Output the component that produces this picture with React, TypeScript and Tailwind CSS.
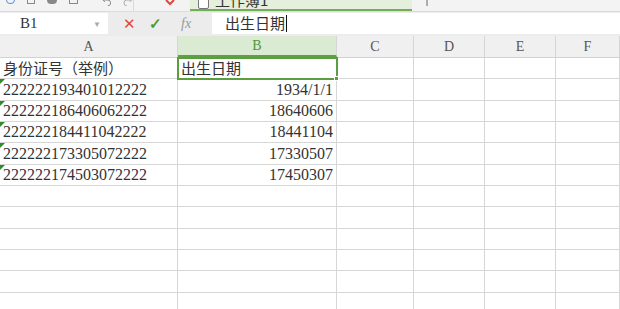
import React from 'react';

const cols = [
  { key: 'A', width: 'w-[178px]' },
  { key: 'B', width: 'w-[159px]' },
  { key: 'C', width: 'w-[77px]' },
  { key: 'D', width: 'w-[71px]' },
  { key: 'E', width: 'w-[71px]' },
  { key: 'F', width: 'w-[64px]' },
];

const rows: { a: string; b: string; flag?: boolean; text?: boolean }[] = [
  { a: '身份证号（举例）', b: '出生日期', text: true },
  { a: '222222193401012222', b: '1934/1/1', flag: true },
  { a: '222222186406062222', b: '18640606', flag: true },
  { a: '222222184411042222', b: '18441104', flag: true },
  { a: '222222173305072222', b: '17330507', flag: true },
  { a: '222222174503072222', b: '17450307', flag: true },
  { a: '', b: '' },
  { a: '', b: '' },
  { a: '', b: '' },
  { a: '', b: '' },
  { a: '', b: '' },
  { a: '', b: '' },
];

const serif = "font-['Liberation_Serif','Noto_Sans_CJK_SC',serif]";
const cjk = "font-['Noto_Sans_CJK_SC',sans-serif]";

const TopStrip = () => (
  <div className="flex h-[11px] overflow-hidden bg-[#f3f3f3]">
    <div className="flex w-[133px] items-start gap-[12px] pl-[6px] -mt-[4px]">
      <div className="h-[8px] w-[9px] rounded-sm border border-[#5b8fd6]" />
      <div className="h-[8px] w-[9px] border border-[#888]" />
      <div className="h-[8px] w-[10px] rounded-sm bg-[#888]" />
      <div className="h-[8px] w-[9px] border border-[#888]" />
      <svg width="10" height="10" viewBox="0 0 10 10" className="ml-[12px]">
        <path d="M3 2 L1 4 L3 6 M1 4 H6 A3 3 0 0 1 6 10" fill="none" stroke="#888" strokeWidth="1" />
      </svg>
      <svg width="10" height="10" viewBox="0 0 10 10">
        <path d="M7 2 L9 4 L7 6 M9 4 H4 A3 3 0 0 0 4 10" fill="none" stroke="#aaa" strokeWidth="1" />
      </svg>
    </div>
    <div className="h-full w-px bg-[#dadada]" />
    <div className="flex w-[56px] items-start justify-center pl-[16px]">
      <svg width="10" height="8" viewBox="0 0 10 8">
        <path d="M1 0 L5 4 L9 0" fill="none" stroke="#e0483f" strokeWidth="2" />
      </svg>
    </div>
    <div className="flex w-[222px] items-start gap-[6px] border-b-2 border-[#74ad5a] bg-[#e4efdc] pl-[8px] -mt-[2px]">
      <div className="h-[11px] w-[11px] rounded-[2px] border border-[#777] bg-white" />
      <span className={`${cjk} -mt-[6px] text-[15px] leading-[15px] text-[#333]`}>工作簿1</span>
    </div>
    <div className="flex w-[30px] items-start justify-center">
      <svg width="8" height="6" viewBox="0 0 8 6">
        <path d="M4 0 V6" stroke="#666" strokeWidth="1" />
      </svg>
    </div>
  </div>
);

const FormulaBar = () => (
  <div className="flex h-[25px] border-t border-[#dcdcdc] bg-[#ececec] pt-px pb-[2px]">
    <div className="flex w-[108px] items-center justify-between bg-white pl-[20px] pr-[7px]">
      <span className={`${serif} text-[15px] text-[#333]`}>B1</span>
      <span className="text-[8px] text-[#aaa]">▼</span>
    </div>
    <div className="flex w-[104px] items-center gap-[13px] pl-[15px]">
      <span className="text-[15px] leading-none text-[#e0483f]">✕</span>
      <span className="text-[15px] font-bold leading-none text-[#4e9a2e]">✓</span>
      <span className={`${serif} ml-[6px] text-[14px] italic text-[#999]`}>fx</span>
    </div>
    <div className="flex flex-1 items-center bg-white pl-[13px]">
      <span className={`${cjk} text-[15px] text-[#333]`}>出生日期</span>
      <span className="ml-px h-[17px] w-px bg-[#111]" />
    </div>
  </div>
);

const Header = () => (
  <div className="flex h-[22px] border-b border-[#d2d2d2] bg-[#f0f0f0]">
    {cols.map((c) =>
      c.key === 'B' ? (
        <div
          key={c.key}
          className={`${c.width} ${serif} flex items-center justify-center border-r border-b-2 border-[#d6d6d6] border-b-[#5fa046] bg-[#dbead3] text-[14px] text-[#4a9a34]`}
        >
          {c.key}
        </div>
      ) : (
        <div
          key={c.key}
          className={`${c.width} ${serif} flex items-center justify-center border-r border-[#d6d6d6] text-[14px] text-[#555]`}
        >
          {c.key}
        </div>
      )
    )}
  </div>
);

const Grid = () => (
  <div className="relative">
    {rows.map((r, i) => (
      <div key={i} className="flex h-[21.33px] border-b border-[#d6d6d6]">
        {cols.map((c) => (
          <div
            key={c.key}
            className={`${c.width} relative flex items-end overflow-hidden border-r border-[#d6d6d6] pb-[1px] ${
              c.key === 'B' && !r.text ? 'justify-end pr-[3px]' : 'pl-[3px]'
            } ${r.text ? `${cjk} text-[15px]` : `${serif} text-[16px]`} leading-[18px] text-[#333]`}
          >
            {c.key === 'A' && r.flag && (
              <span className="absolute left-0 top-0 h-0 w-0 border-t-[5px] border-r-[5px] border-t-[#2e8b2e] border-r-transparent" />
            )}
            {c.key === 'A' ? r.a : c.key === 'B' ? r.b : ''}
          </div>
        ))}
      </div>
    ))}
    <div className="pointer-events-none absolute left-[177px] top-[-1px] h-[23px] w-[161px] border-2 border-[#5a9e40]">
      <span className="absolute -bottom-[3px] -right-[3px] h-[5px] w-[5px] border border-white bg-[#5a9e40]" />
    </div>
  </div>
);

export default function App() {
  return (
    <div className="h-[309px] w-[620px] overflow-hidden bg-white">
      <TopStrip />
      <FormulaBar />
      <Header />
      <Grid />
    </div>
  );
}
